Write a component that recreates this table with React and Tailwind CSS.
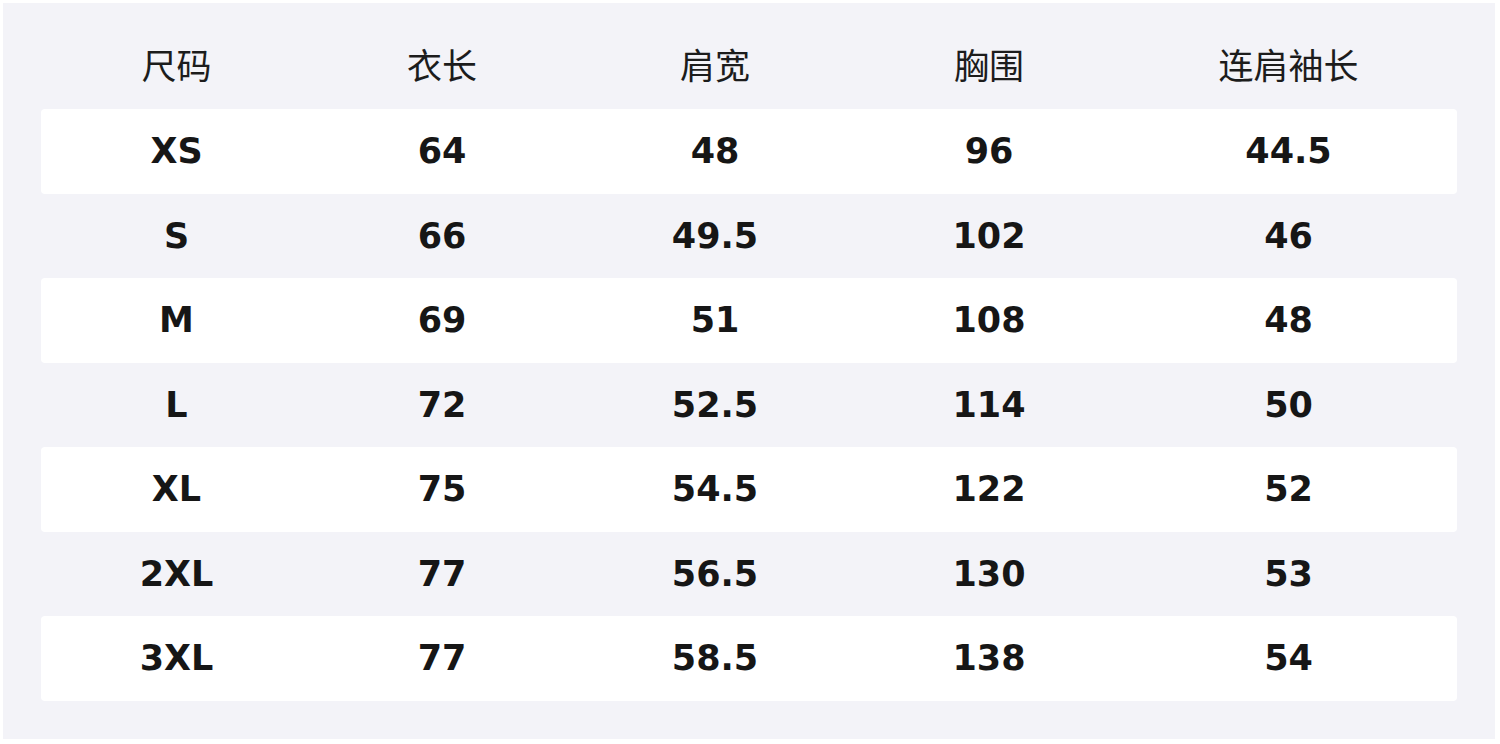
const headers = ['尺码', '衣长', '肩宽', '胸围', '连肩袖长'];

const rows = [
  ['XS', '64', '48', '96', '44.5'],
  ['S', '66', '49.5', '102', '46'],
  ['M', '69', '51', '108', '48'],
  ['L', '72', '52.5', '114', '50'],
  ['XL', '75', '54.5', '122', '52'],
  ['2XL', '77', '56.5', '130', '53'],
  ['3XL', '77', '58.5', '138', '54'],
];

const cols = 'grid w-[1416px] grid-cols-[271px_260px_286px_262px_337px]';

export default function App() {
  return (
    <div
      className="w-[1500px] h-[744px] bg-white p-[3px] overflow-hidden"
      style={{ fontFamily: '"DejaVu Sans", "Noto Sans CJK SC", sans-serif' }}
    >
      <div className="h-[736px] w-[1492px] bg-[#f3f3f8] pl-[38px] pt-[21.5px]">
        <div className={`${cols} h-[84.5px] items-center pb-[6px] text-[35px] text-[#1c1c1c]`}>
          {headers.map((h) => (
            <div key={h} className="text-center" style={{ fontFamily: '"Noto Sans CJK SC", sans-serif' }}>
              {h}
            </div>
          ))}
        </div>
        {rows.map((r, i) => (
          <div
            key={r[0]}
            className={`${cols} h-[84.5px] items-center rounded-sm text-[35px] font-bold text-[#161616] ${
              i % 2 === 0 ? 'bg-white' : 'bg-transparent'
            }`}
          >
            {r.map((c, j) => (
              <div key={j} className="text-center">
                {c}
              </div>
            ))}
          </div>
        ))}
      </div>
    </div>
  );
}
